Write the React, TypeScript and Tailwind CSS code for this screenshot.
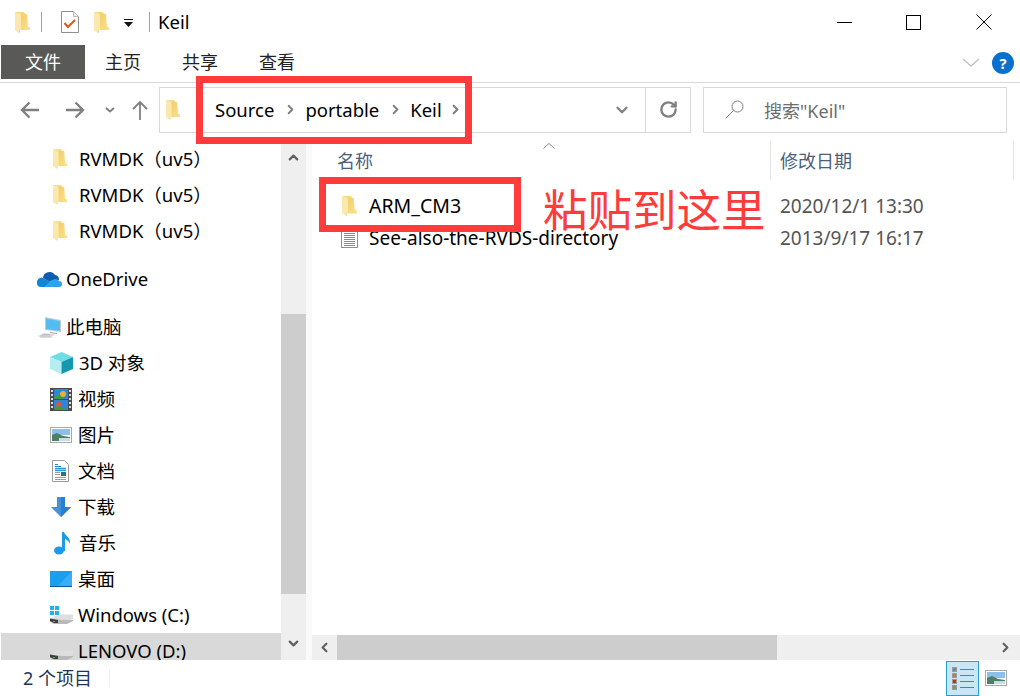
import React from 'react';
import { ChevronDown, ChevronLeft, ChevronRight, ChevronUp, RotateCw } from 'lucide-react';

const Folder: React.FC<{ className?: string }> = ({ className }) => (
  <svg viewBox="0 0 15 21" className={className}>
    <defs>
      <linearGradient id="folderBody" x1="0" y1="0" x2="1" y2="1">
        <stop offset="0" stopColor="#f3cf6a" />
        <stop offset="1" stopColor="#fbe08c" />
      </linearGradient>
    </defs>
    <path d="M0 0h9v1h1v15h5v2H5v3l-5-3z" fill="#f5d67e" />
    <path d="M6 2h6l1 13h2v3H6z" fill="url(#folderBody)" />
    <path d="M0 0l6 2v16H4v3l-4-3z" fill="#fbe8ae" />
  </svg>
);

const TextFile: React.FC<{ className?: string }> = ({ className }) => (
  <svg viewBox="0 0 17 20" className={className}>
    <rect x="0.5" y="0.5" width="16" height="19" fill="#fff" stroke="#8f8f8f" />
    {[3, 5, 7, 9, 11, 13, 15, 17].map((y) => (
      <path key={y} d={`M3 ${y}.5h11`} stroke="#8a8a8a" strokeWidth="1" />
    ))}
  </svg>
);

const CloudIcon = () => (
  <svg viewBox="0 0 25 16" className="w-[25px] h-[16px]">
    <path d="M6 7a6.500 6.500 0 0 1 12-3 5 5 0 0 1 4 5l-9 2z" fill="#0c5db0" />
    <path d="M0 12a4.500 4.500 0 0 1 6-5l8 4-6 5H4a4 4 0 0 1-4-4z" fill="#1086d8" />
    <path d="M8 16l5-6 5-2a4 4 0 0 1 4 2 3 3 0 0 1 3 3 3 3 0 0 1-3 3z" fill="#2aa4ec" />
  </svg>
);

const PcIcon = () => (
  <svg viewBox="0 0 24 21" className="w-[24px] h-[21px]">
    <path d="M7 0l16 3v12L7 13z" fill="#c4ccd2" />
    <path d="M8 1.500l14 2.500v10l-14-2z" fill="#52bdf2" />
    <path d="M12 15l7 1v1l-7-1z" fill="#9aa4ac" />
    <path d="M0 19l6-3 11 1 -4 4H3z" fill="#d8dce0" />
    <path d="M2 19h10M4 17.500h8" stroke="#b0b6bb" strokeWidth="0.7" />
  </svg>
);

const CubeIcon = () => (
  <svg viewBox="0 0 23 22" className="w-[23px] h-[22px]">
    <path d="M11.500 0L23 5l-11.500 5L0 5z" fill="#6fdde8" />
    <path d="M0 5l11.500 5v12L0 17z" fill="#b5eef0" />
    <path d="M23 5l-11.500 5v12L23 17z" fill="#1597ad" />
  </svg>
);

const VideoIcon = () => (
  <svg viewBox="0 0 22 23" className="w-[22px] h-[23px]">
    <rect width="22" height="23" fill="#4a4a4a" />
    <rect x="4" y="1" width="14" height="10" fill="#2f86d8" />
    <rect x="4" y="12" width="14" height="10" fill="#2f86d8" />
    <circle cx="13" cy="6" r="3" fill="#e8b030" />
    <circle cx="9" cy="17" r="3" fill="#d85a30" />
    <path d="M4 9l5-3 4 5H4zM4 20l5-2 9 4H4z" fill="#3f9a4a" />
    {[2, 6, 10, 14, 18].map((y) => (
      <g key={y} fill="#ddd">
        <rect x="1" y={y} width="2" height="2" />
        <rect x="19" y={y} width="2" height="2" />
      </g>
    ))}
  </svg>
);

const PictureIcon: React.FC<{ className?: string }> = ({ className }) => (
  <svg viewBox="0 0 22 16" className={className}>
    <rect x="0.5" y="0.5" width="21" height="15" fill="#fff" stroke="#a8a8a8" />
    <rect x="2" y="2" width="18" height="6" fill="#8cc0e8" />
    <path d="M2 8l5-2 6 3 7 1v4H2z" fill="#4d7f68" />
    <path d="M9 11h11v3H9z" fill="#c7dde8" />
  </svg>
);

const DocIcon = () => (
  <svg viewBox="0 0 17 22" className="w-[17px] h-[22px]">
    <path d="M.5.500h12l4 4v17H.5z" fill="#fff" stroke="#9a9a9a" />
    <path d="M3 4.500h3M3 6.500h6" stroke="#2a8adf" />
    <path d="M3 8.500h11M3 10.500h11" stroke="#2a9ae8" strokeWidth="1.400" />
    <rect x="9" y="12" width="5" height="4" fill="#2f6f80" />
    <path d="M3 12.500h5M3 14.500h5M3 17.500h11M3 19.500h11" stroke="#9a9a9a" />
  </svg>
);

const DownloadIcon = () => (
  <svg viewBox="0 0 20 20" className="w-[20px] h-[20px]">
    <path d="M6 0h8v10h6l-10 10L0 10h6z" fill="#3f93de" />
    <path d="M10 0h4v10h6L10 20z" fill="#2a7fcc" />
  </svg>
);

const MusicIcon = () => (
  <svg viewBox="0 0 18 23" className="w-[18px] h-[23px]">
    <ellipse cx="6" cy="18.500" rx="5" ry="4" fill="#1a9ae8" />
    <path d="M9 0h2c1 4 7 5 6 12-1-3-3-4-5-5v12H9z" fill="#1a9ae8" />
  </svg>
);

const DesktopIcon = () => (
  <svg viewBox="0 0 22 16" className="w-[22px] h-[16px]">
    <rect width="22" height="15" fill="#1a9ef0" />
    <path d="M22 0v15H8z" fill="#3aaef5" />
    <rect y="15" width="22" height="1" fill="#0a5a98" />
  </svg>
);

const DriveIcon: React.FC<{ windows?: boolean }> = ({ windows }) => (
  <svg viewBox="0 0 23 18" className="w-[23px] h-[18px]">
    <path d="M0 12.500l8-4h15v4l-6 4H2z" fill="#dedede" />
    <path d="M0 12.500l12 1.500h11v1l-6 3H4l-4-2z" fill="#b9b9b9" />
    <path d="M0 12.500l8 1.500v3H4l-4-2z" fill="#3f3f3f" />
    <rect x="3" y="15" width="2" height="1" fill="#5bb55b" />
    {windows && (
      <g fill="#1fb0f0">
        <rect x="0" y="0" width="4" height="4" />
        <rect x="5" y="0" width="4" height="4" />
        <rect x="0" y="5" width="4" height="4" />
        <rect x="5" y="5" width="4" height="4" />
      </g>
    )}
  </svg>
);

const NavRow: React.FC<{ icon: React.ReactNode; label: string; indent?: string; gap?: string; selected?: boolean; mt?: string }> = ({
  icon,
  label,
  indent = 'pl-[50px]',
  gap = 'w-[29px]',
  selected,
  mt,
}) => (
  <div className={`h-[36px] shrink-0 flex items-center ${indent} ${selected ? 'bg-[#d9d9d9] ml-px' : ''} ${mt ?? ''}`}>
    <div className={`${gap} flex items-center shrink-0`}>{icon}</div>
    <span className="text-[18.500px] text-black whitespace-nowrap">{label}</span>
  </div>
);

export default function App() {
  return (
    <div
      className="relative w-[1020px] h-[696px] overflow-hidden bg-white flex flex-col"
      style={{ fontFamily: '"Noto Sans", "Noto Sans CJK SC", sans-serif' }}
    >
      {/* title bar */}
      <div className="h-[44px] flex items-center shrink-0">
        <Folder className="w-[15px] h-[21px] ml-[15px]" />
        <div className="w-px h-[20px] bg-[#a0a0a0] ml-[11px]" />
        <svg viewBox="0 0 18 22" className="w-[18px] h-[22px] ml-[19px]">
          <path d="M.5.500h12l5 5v16H.5z" fill="#fff" stroke="#8f8f8f" />
          <path d="M12.500.500v5h5" fill="#eee" stroke="#bbb" />
          <path d="M3.500 12l3.500 4 7-7" fill="none" stroke="#e8501c" strokeWidth="2" />
        </svg>
        <Folder className="w-[15px] h-[21px] ml-[15px]" />
        <svg viewBox="0 0 9 9" className="w-[9px] h-[9px] ml-[15px] mt-[3px]">
          <path d="M0 0h9v1H0zM0 3h9L4.500 8z" fill="#111" />
        </svg>
        <div className="w-px h-[20px] bg-[#a0a0a0] ml-[16px]" />
        <span className="ml-[8px] text-[18.500px] text-black">Keil</span>
        <div className="ml-auto flex items-center">
          <div className="w-[15px] h-px bg-black" />
          <div className="w-[15px] h-[15px] border border-black ml-[54px]" />
          <svg viewBox="0 0 16 16" className="w-[16px] h-[16px] ml-[55px] mr-[28px]">
            <path d="M.5.500l15 15M15.500.500l-15 15" stroke="#000" strokeWidth="1" />
          </svg>
        </div>
      </div>

      {/* ribbon tabs */}
      <div className="h-[39px] shrink-0 border-b border-[#d9d9d9] flex items-start relative">
        <div className="w-[84px] h-[34px] ml-px mt-px bg-[#595957] text-white text-[18px] flex items-center justify-center">文件</div>
        <div className="flex text-[18px] text-[#222] h-[35px] items-center mt-px">
          <span className="ml-[20px]">主页</span>
          <span className="ml-[41px]">共享</span>
          <span className="ml-[41px]">查看</span>
        </div>
        <svg viewBox="0 0 18 10" className="w-[18px] h-[10px] ml-auto mt-[14px]">
          <path d="M1 1l8 7 8-7" fill="none" stroke="#c4c4c4" strokeWidth="1.500" />
        </svg>
        <div className="w-[22px] h-[22px] rounded-full bg-[#0a70d0] text-white text-[15px] font-bold flex items-center justify-center ml-[12px] mr-[6px] mt-[8px]">?</div>
      </div>

      {/* address row */}
      <div className="h-[58px] shrink-0 flex items-center pb-[5px]">
        <svg viewBox="0 0 19 18" className="w-[19px] h-[18px] ml-[20px]">
          <path d="M19 9H2M9.500 1.500L2 9l7.500 7.500" fill="none" stroke="#808080" strokeWidth="2.400" />
        </svg>
        <svg viewBox="0 0 19 18" className="w-[19px] h-[18px] ml-[27px]">
          <path d="M0 9h17M9.500 1.500L17 9l-7.500 7.500" fill="none" stroke="#808080" strokeWidth="2.400" />
        </svg>
        <svg viewBox="0 0 10 6" className="w-[10px] h-[6px] ml-[20px]">
          <path d="M1 1l4 3.500L9 1" fill="none" stroke="#808080" strokeWidth="2" />
        </svg>
        <svg viewBox="0 0 16 20" className="w-[16px] h-[20px] ml-[17px]">
          <path d="M8 20V2M1 9l7-7 7 7" fill="none" stroke="#808080" strokeWidth="1.800" />
        </svg>
        <div className="w-[532px] h-[46px] ml-[11px] border border-[#d9d9d9] flex items-center">
          <Folder className="w-[14px] h-[20px] ml-[6px]" />
          <span className="ml-[35px] text-[18.500px] text-black">Source</span>
          <ChevronRight className="w-[15px] h-[15px] text-[#808080] ml-[9px]" strokeWidth={3} />
          <span className="ml-[7px] text-[18.500px] text-black">portable</span>
          <ChevronRight className="w-[15px] h-[15px] text-[#808080] ml-[9px]" strokeWidth={3} />
          <span className="ml-[7px] text-[18.500px] text-black">Keil</span>
          <ChevronRight className="w-[15px] h-[15px] text-[#808080] ml-[6px]" strokeWidth={3.5} />
          <ChevronDown className="w-[18px] h-[18px] text-[#808080] ml-auto mr-[14px]" strokeWidth={3} />
          <div className="w-[45px] h-full border-l border-[#d9d9d9] flex items-center justify-center">
            <RotateCw className="w-[19px] h-[19px] text-[#808080]" strokeWidth={3} />
          </div>
        </div>
        <div className="w-[304px] h-[46px] ml-[12px] border border-[#d9d9d9] flex items-center">
          <svg viewBox="0 0 19 19" className="w-[19px] h-[19px] ml-[21px]">
            <circle cx="12.500" cy="6.500" r="5.500" fill="none" stroke="#808080" strokeWidth="1" />
            <path d="M8.500 10.500L.5 18.500" stroke="#808080" strokeWidth="1" />
          </svg>
          <span className="ml-[20px] mt-[3px] text-[18px] text-[#6d6d6d]">搜索"Keil"</span>
        </div>
      </div>

      {/* main */}
      <div className="h-[519px] flex shrink-0 overflow-hidden">
        <div className="w-[281px] shrink-0 overflow-hidden flex flex-col">
          <NavRow icon={<Folder className="w-[14px] h-[20px] ml-[3px]" />} label="RVMDK（uv5）" />
          <NavRow icon={<Folder className="w-[14px] h-[20px] ml-[3px]" />} label="RVMDK（uv5）" />
          <NavRow icon={<Folder className="w-[14px] h-[20px] ml-[3px]" />} label="RVMDK（uv5）" />
          <NavRow icon={<CloudIcon />} label="OneDrive" indent="pl-[37px]" mt="mt-[12px]" />
          <NavRow icon={<PcIcon />} label="此电脑" indent="pl-[38px]" gap="w-[28px]" mt="mt-[12px]" />
          <NavRow icon={<CubeIcon />} label="3D 对象" />
          <NavRow icon={<VideoIcon />} label="视频" indent="pl-[50px]" gap="w-[28px]" />
          <NavRow icon={<PictureIcon className="w-[22px] h-[16px]" />} label="图片" gap="w-[28px]" />
          <NavRow icon={<div className="ml-[2px]"><DocIcon /></div>} label="文档" gap="w-[28px]" />
          <NavRow icon={<div className="ml-[1px]"><DownloadIcon /></div>} label="下载" gap="w-[28px]" />
          <NavRow icon={<div className="ml-[3px]"><MusicIcon /></div>} label="音乐" gap="w-[29px]" />
          <NavRow icon={<DesktopIcon />} label="桌面" gap="w-[28px]" />
          <NavRow icon={<DriveIcon windows />} label="Windows (C:)" gap="w-[28px]" />
          <NavRow icon={<DriveIcon />} label="LENOVO (D:)" indent="pl-[49px]" gap="w-[28px]" selected />
        </div>

        {/* vertical scrollbar */}
        <div className="w-[25px] shrink-0 bg-[#efefef] flex flex-col items-center">
          <div className="h-[30px] flex items-center justify-center mt-px">
            <ChevronUp className="w-[15px] h-[15px] text-[#606060]" strokeWidth={3.5} />
          </div>
          <div className="w-full h-[280px] bg-[#cdcdcd] mt-[142px] mr-px" />
          <div className="h-[30px] flex items-center justify-center mt-auto mb-[2px]">
            <ChevronDown className="w-[15px] h-[15px] text-[#606060]" strokeWidth={3.5} />
          </div>
        </div>
        <div className="w-[6px] shrink-0 bg-[#f9f9f9]" />

        {/* file list */}
        <div className="flex-1 min-w-0 flex flex-col">
          <div className="h-[39px] shrink-0 flex relative">
            <span className="ml-[25px] mt-[7px] w-[433px] text-[18px] text-[#4c607a]">名称</span>
            <svg viewBox="0 0 12 6" className="absolute left-[231px] top-[2px] w-[12px] h-[6px]">
              <path d="M.5 5.500L6 .5l5.500 5" fill="none" stroke="#8a8a8a" strokeWidth="1" />
            </svg>
            <div className="w-px h-[39px] bg-[#e5e5e5]" />
            <span className="ml-[9px] mt-[7px] text-[18px] text-[#4c607a]">修改日期</span>
            <div className="w-px h-[39px] bg-[#e5e5e5] ml-auto mr-[6px]" />
          </div>
          <div className="flex-1 min-h-0">
            <div className="h-[32px] mt-[10px] flex items-center">
              <Folder className="w-[15px] h-[20px] ml-[30px]" />
              <span className="ml-[12px] w-[411px] text-[19.500px] text-black">ARM_CM3</span>
              <span className="text-[19px] text-[#555]">2020/12/1 13:30</span>
            </div>
            <div className="h-[32px] flex items-center">
              <TextFile className="w-[17px] h-[20px] ml-[29px]" />
              <span className="ml-[11px] w-[411px] text-[19px] text-black whitespace-nowrap">See-also-the-RVDS-directory</span>
              <span className="text-[19px] text-[#555]">2013/9/17 16:17</span>
            </div>
          </div>
          <div className="h-[25px] shrink-0 bg-[#efefef] flex items-center">
            <div className="w-[25px] flex justify-center">
              <ChevronLeft className="w-[15px] h-[15px] text-[#606060]" strokeWidth={3.5} />
            </div>
            <div className="w-[440px] h-full bg-[#cdcdcd]" />
            <div className="ml-auto w-[30px] flex justify-center">
              <ChevronRight className="w-[15px] h-[15px] text-[#606060]" strokeWidth={3.5} />
            </div>
          </div>
        </div>
      </div>

      {/* status bar */}
      <div className="flex-1 flex items-center">
        <span className="ml-[23px] text-[18px] text-[#1f3550]">2 个项目</span>
        <div className="w-px h-[18px] bg-[#f0f0f0] ml-[17px]" />
        <div className="ml-auto w-[33px] h-[35px] bg-[#c9e6f5] border border-[#26a0da] flex flex-col items-center justify-center gap-[1px]">
          {['#5b8fb0', '#c08040', '#c03020', '#80a040'].map((c) => (
            <div key={c} className="flex items-center gap-[3px]">
              <div className="w-[5px] h-[5px] border border-[#9a9a9a]" style={{ backgroundColor: c }} />
              <div className="w-[14px] h-px bg-[#777]" />
            </div>
          ))}
        </div>
        <PictureIcon className="w-[22px] h-[16px] ml-[6px] mr-[13px]" />
      </div>

      {/* red annotations */}
      <div className="absolute left-[196px] top-[76px] w-[276px] h-[68px] border-[7px] border-[#ff3b3b]" />
      <div className="absolute left-[319px] top-[177px] w-[202px] h-[55px] border-[7px] border-[#ff3b3b]" />
      <div className="absolute left-[543px] top-[180px] text-[44.500px] leading-[60px] text-[#ff3b3b] whitespace-nowrap">粘贴到这里</div>
    </div>
  );
}
